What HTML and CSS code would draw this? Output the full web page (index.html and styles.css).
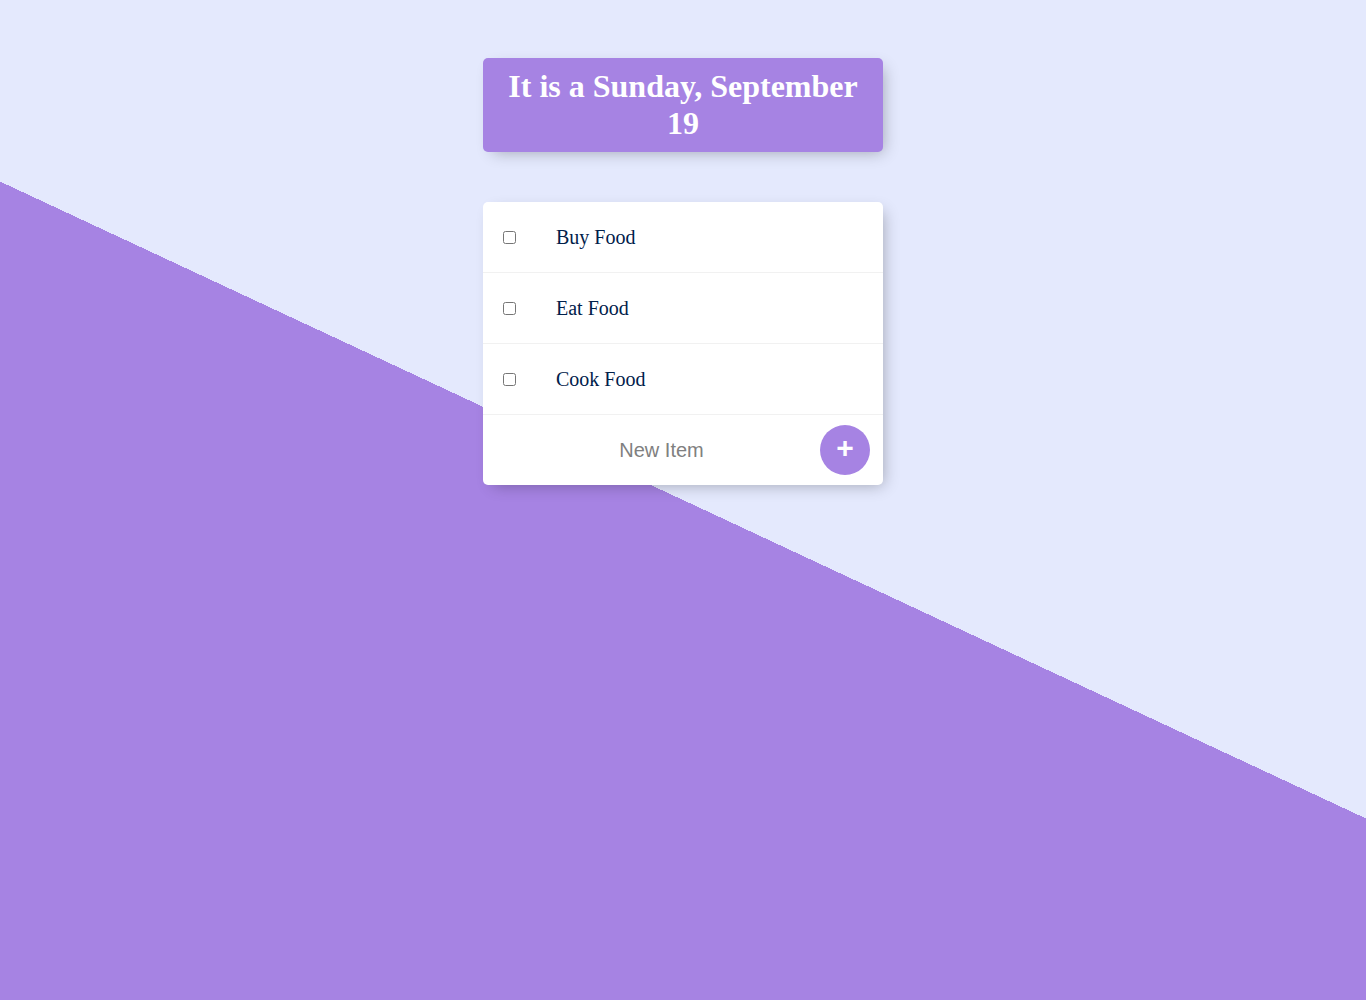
FILE: index.html
```html
<!DOCTYPE html>
<html lang="en">
<head>
<meta charset="utf-8">
<title>To-Do List</title>
<link rel="stylesheet" href="styles.css">
</head>
<body class="page">
  <div class="box heading">
    <h1 class="title">It is a Sunday, September 19</h1>
  </div>
  <div class="box">
    <div class="item">
      <input class="check" type="checkbox">
      <p class="label">Buy Food</p>
    </div>
    <div class="item">
      <input class="check" type="checkbox">
      <p class="label">Eat Food</p>
    </div>
    <div class="item">
      <input class="check" type="checkbox">
      <p class="label">Cook Food</p>
    </div>
    <form class="item new-form" action="/" method="post">
      <input class="new-input" type="text" name="newItem" placeholder="New Item" autocomplete="off">
      <button class="add-btn" type="submit" name="list">+</button>
    </form>
  </div>
</body>
</html>
```
FILE: styles.css
```css
html {
  background-color: #E4E9FD;
  background-image: linear-gradient(25deg, #A683E3 50%, #E4E9FD 50%);
  min-height: 1000px;
  font-family: "Liberation Serif", "Times New Roman", serif;
}

.page {
  margin: 8px;
}

.title {
  color: #fff;
  padding: 10px;
  margin: 21px 0;
  font-size: 32px;
  font-weight: bold;
  font-family: "Liberation Serif", serif;
}

.box {
  max-width: 400px;
  margin: 50px auto;
  background: white;
  border-radius: 5px;
  box-shadow: 5px 5px 15px -5px rgba(0, 0, 0, 0.3);
}

.heading {
  background-color: #A683E3;
  text-align: center;
}

.item {
  min-height: 70px;
  display: flex;
  align-items: center;
  border-bottom: 1px solid #F1F1F1;
}

.item:last-child {
  border-bottom: 0;
}

.check {
  margin: 20px;
  width: 13px;
  height: 13px;
}

.label {
  margin: 0;
  padding: 20px;
  font-size: 20px;
  font-weight: 200;
  color: #00204a;
  font-family: "Liberation Serif", serif;
}

.new-form {
  text-align: center;
  margin-left: 20px;
}

.new-input {
  text-align: center;
  height: 60px;
  border: none;
  padding: 1px 2px;
  margin: 0;
  background: transparent;
  font-family: "Liberation Sans", Arial, sans-serif;
  font-size: 20px;
  font-weight: 200;
  width: 313px;
}

.new-input:focus {
  outline: none;
  box-shadow: inset 0 -3px 0 0 #A683E3;
}

.new-input::placeholder {
  color: grey;
  opacity: 1;
}

.add-btn {
  min-height: 50px;
  width: 50px;
  border-radius: 50%;
  border: 0;
  background-color: #A683E3;
  color: #fff;
  font-family: "Liberation Sans", Arial, sans-serif;
  font-size: 30px;
  font-weight: bold;
  padding: 1px 6px 6px;
  margin: 0;
  cursor: pointer;
}
```
